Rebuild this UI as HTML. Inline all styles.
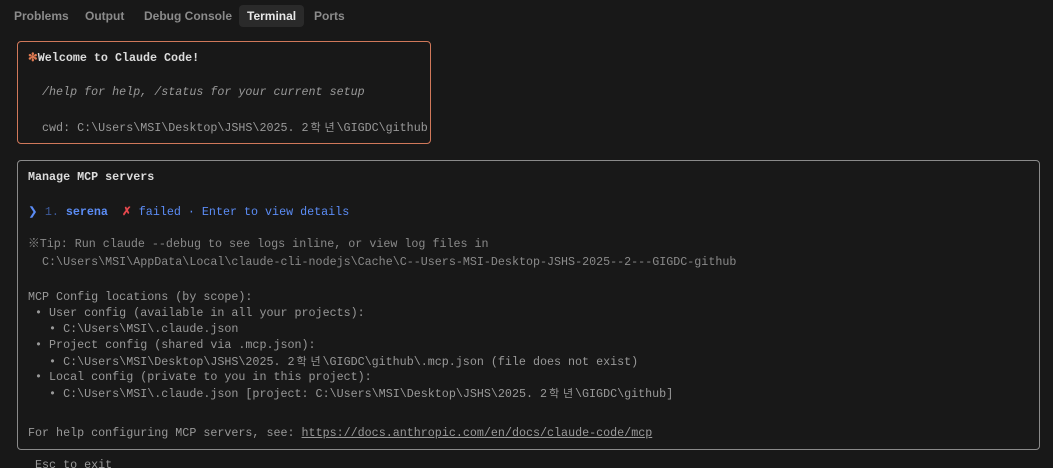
<!DOCTYPE html>
<html><head><meta charset="utf-8"><style>
html,body{margin:0;padding:0;background:#181818;width:1053px;height:468px;overflow:hidden;position:relative}
.tabs{position:absolute;top:5px;left:6px;font-family:"Liberation Sans",sans-serif;font-size:12px;font-weight:bold;color:#8b8b8b}
.tab{position:absolute;top:0;height:22px;line-height:22px;padding:0 8px;white-space:nowrap;border-radius:4px}
.tab.a{background:#2a2a2a;color:#e8e8e8}
.box{position:absolute;border:1px solid;border-radius:4px;box-sizing:border-box}
.l{position:absolute;font-family:"Liberation Mono","Noto Sans CJK KR",monospace;font-size:11.7px;line-height:18px;white-space:pre;color:#999}
.k{display:inline-block;width:14px;text-align:center;font-family:"Noto Sans CJK KR",sans-serif;font-size:11px}
.b{color:#dcdcdc;font-weight:bold}
.bl{color:#5b8cf5}
.i{font-style:italic}
</style></head><body>
<div class="tabs">
<div class="tab" style="left:0">Problems</div>
<div class="tab" style="left:71px">Output</div>
<div class="tab" style="left:130px">Debug Console</div>
<div class="tab a" style="left:233px">Terminal</div>
<div class="tab" style="left:300px">Ports</div>
</div>
<div class="box" style="left:17px;top:41px;width:414px;height:103px;border-color:#d0785a"></div>
<div class="box" style="left:17px;top:160px;width:1023px;height:290px;border-color:#8a8a8a"></div>

<div class="l b" style="left:28px;top:49px"><span style="color:#e07a52">✻</span>Welcome to Claude Code!</div>
<div class="l i" style="left:28px;top:83px">  /help for help, /status for your current setup</div>
<div class="l" style="left:28px;top:118px">  cwd: C:\Users\MSI\Desktop\JSHS\2025. 2<span class="k">학</span><span class="k">년</span>\GIGDC\github</div>

<div class="l b" style="left:28px;top:168px">Manage MCP servers</div>
<div class="l bl" style="left:28px;top:203px">❯ <span style="color:#3d5a9a">1.</span> <b>serena</b>  <span style="color:#e5484d;font-weight:bold">✗</span> failed · Enter to view details</div>
<div class="l" style="left:28px;top:235px;color:#8a8a8a">※Tip: Run claude --debug to see logs inline, or view log files in</div>
<div class="l" style="left:28px;top:253px;color:#8a8a8a">  C:\Users\MSI\AppData\Local\claude-cli-nodejs\Cache\C--Users-MSI-Desktop-JSHS-2025--2---GIGDC-github</div>
<div class="l" style="left:28px;top:288px">MCP Config locations (by scope):</div>
<div class="l" style="left:28px;top:304px"> • User config (available in all your projects):</div>
<div class="l" style="left:28px;top:320px">   • C:\Users\MSI\.claude.json</div>
<div class="l" style="left:28px;top:336px"> • Project config (shared via .mcp.json):</div>
<div class="l" style="left:28px;top:352px">   • C:\Users\MSI\Desktop\JSHS\2025. 2<span class="k">학</span><span class="k">년</span>\GIGDC\github\.mcp.json (file does not exist)</div>
<div class="l" style="left:28px;top:368px"> • Local config (private to you in this project):</div>
<div class="l" style="left:28px;top:384px">   • C:\Users\MSI\.claude.json [project: C:\Users\MSI\Desktop\JSHS\2025. 2<span class="k">학</span><span class="k">년</span>\GIGDC\github]</div>
<div class="l" style="left:28px;top:424px">For help configuring MCP servers, see: <span style="text-decoration:underline">https://docs.anthropic.com/en/docs/claude-code/mcp</span></div>
<div class="l" style="left:28px;top:456px"> Esc to exit</div>
</body></html>
